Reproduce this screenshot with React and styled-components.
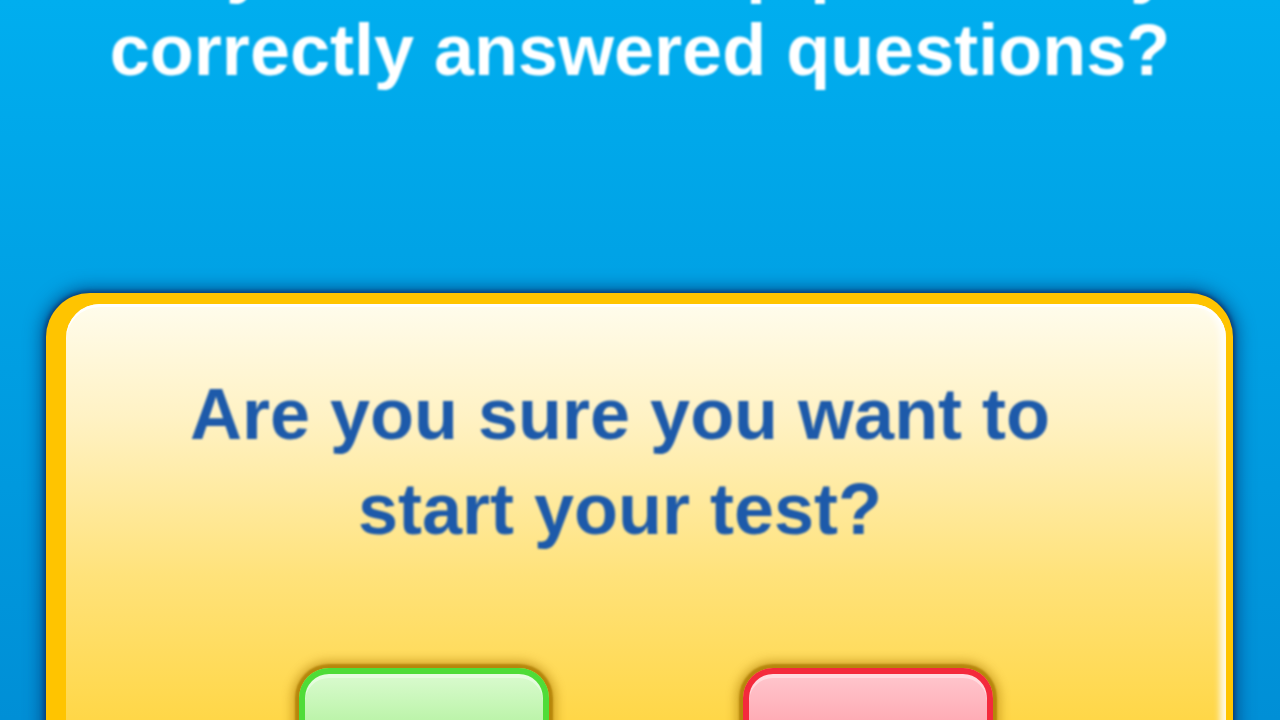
import styled, { createGlobalStyle } from "styled-components";

const GlobalStyle = createGlobalStyle`
  html, body {
    margin: 0;
    padding: 0;
  }
  body {
    font-family: "Liberation Sans", Arial, sans-serif;
  }
`

export default function App() {
    return (
        <>
            <GlobalStyle />
            <Screen>
                <Question>
                    Do you want to skip previously<br />
                    correctly answered questions?
                </Question>
                <Dialog>
                    <Panel>
                        <Message>
                            Are you sure you want to<br />
                            start your test?
                        </Message>
                        <Actions>
                            <ChoiceButton tone="yes" aria-label="Yes" />
                            <ChoiceButton tone="no" aria-label="No" />
                        </Actions>
                    </Panel>
                </Dialog>
            </Screen>
        </>
    )
}

const tones = {
    yes: {
        edge: "#4fdc38",
        top: "#dafbcf",
        bottom: "#a4ee8c",
    },
    no: {
        edge: "#f42a3c",
        top: "#ffc6cd",
        bottom: "#ff97a3",
    },
}

const Screen = styled.div`
    width: 1280px;
    height: 720px;
    overflow: hidden;
    background: linear-gradient(180deg, #00aeef 0%, #00a3e6 35%, #008fd6 100%);
    display: flex;
    flex-direction: column;
`
const Question = styled.p`
    margin: -79px 0 0;
    text-align: center;
    color: #ffffff;
    font-size: 72px;
    font-weight: bold;
    line-height: 86px;
    filter: blur(0.9px);
`
const Dialog = styled.div`
    margin: 200px 47px 0 46px;
    padding: 11px 7px 0 20px;
    flex: 1;
    background: #ffc400;
    border-radius: 44px 44px 0 0;
    box-shadow: 0 0 4px 2px #0a3f7a, 0 0 16px 6px rgba(0, 50, 110, 0.55);
    display: flex;
`
const Panel = styled.div`
    flex: 1;
    border-radius: 34px 34px 0 0;
    background: linear-gradient(180deg, #fffcec 0%, #fff2c4 25%, #ffe27a 60%, #ffd43a 100%);
    box-shadow: inset 0 3px 0 #ffffff, inset -8px 0 6px -2px rgba(255, 255, 255, 0.85);
    padding: 63px 52px 0 0;
    display: flex;
    flex-direction: column;
    align-items: center;
`
const Message = styled.p`
    margin: 0;
    text-align: center;
    color: #1d5aaa;
    font-size: 72px;
    font-weight: bold;
    line-height: 95px;
    filter: blur(0.9px);
`
const Actions = styled.div`
    margin: 111px 0 0 52px;
    display: flex;
    gap: 194px;
`
const ChoiceButton = styled.button`
    width: 250px;
    height: 90px;
    padding: 0;
    border: 6px solid ${props => tones[props.tone].edge};
    border-bottom: none;
    border-radius: 30px 30px 0 0;
    background: linear-gradient(180deg, ${props => tones[props.tone].top} 0%, ${props => tones[props.tone].bottom} 100%);
    box-shadow: 0 0 2px 4px rgba(170, 120, 0, 0.75), 0 0 10px 8px rgba(170, 120, 0, 0.45), inset 0 4px 0 rgba(255, 255, 255, 0.4);
`
